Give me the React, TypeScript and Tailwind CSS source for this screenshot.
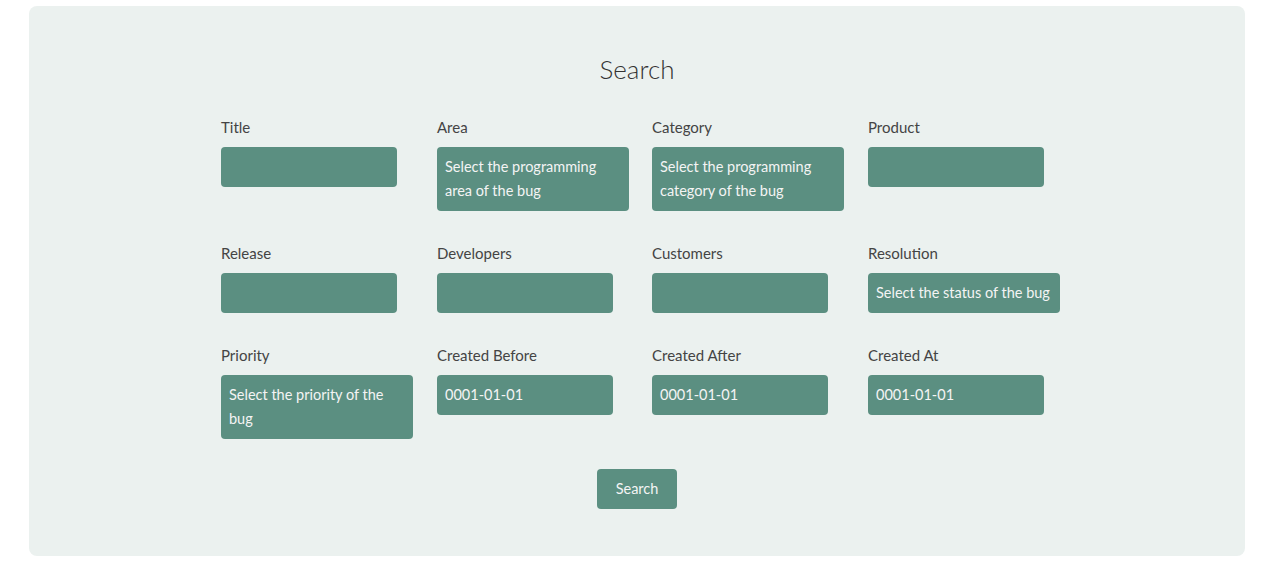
const font = { fontFamily: "Lato, 'Open Sans', sans-serif" };

type Field = { label: string; lines?: string[]; wide?: boolean };

const rows: Field[][] = [
  [
    { label: "Title" },
    { label: "Area", lines: ["Select the programming", "area of the bug"], wide: true },
    { label: "Category", lines: ["Select the programming", "category of the bug"], wide: true },
    { label: "Product" },
  ],
  [
    { label: "Release" },
    { label: "Developers" },
    { label: "Customers" },
    { label: "Resolution", lines: ["Select the status of the bug"], wide: true },
  ],
  [
    { label: "Priority", lines: ["Select the priority of the", "bug"], wide: true },
    { label: "Created Before", lines: ["0001-01-01"] },
    { label: "Created After", lines: ["0001-01-01"] },
    { label: "Created At", lines: ["0001-01-01"] },
  ],
];

function FieldBox({ field }: { field: Field }) {
  return (
    <div className="flex flex-col">
      <label className="text-[15px] leading-[20px] text-[#444444] mb-[10px]">{field.label}</label>
      <div
        className={`${field.wide ? "w-[192px]" : "w-[176px]"} min-h-[40px] rounded-[4px] bg-[#5b8f81] px-2 py-2 text-[14.5px] leading-6 text-[#f4f4f4] whitespace-nowrap`}
      >
        {field.lines?.map((l, i) => (
          <div key={i}>{l}</div>
        ))}
      </div>
    </div>
  );
}

export default function App() {
  return (
    <div className="min-h-[565px] bg-white pt-[6px]" style={font}>
      <div className="ml-[29px] w-[1216px] h-[550px] rounded-lg bg-[#ebf1ef] pt-[45px]">
        <h1 className="text-center text-[26px] leading-9 font-light text-[#333333]">Search</h1>

        {/* Form grid */}
        <div className="mt-[30px] ml-[192px] flex flex-col gap-[32px]">
          {rows.map((row, r) => (
            <div key={r} className="grid grid-cols-[216px_215px_216px_216px] items-start">
              {row.map((f) => (
                <FieldBox key={f.label} field={f} />
              ))}
            </div>
          ))}
        </div>

        <div className="mt-[30px] flex justify-center">
          <button className="h-10 w-20 rounded-[4px] bg-[#5b8f81] text-[14.5px] text-[#f4f4f4]">Search</button>
        </div>
      </div>
    </div>
  );
}
